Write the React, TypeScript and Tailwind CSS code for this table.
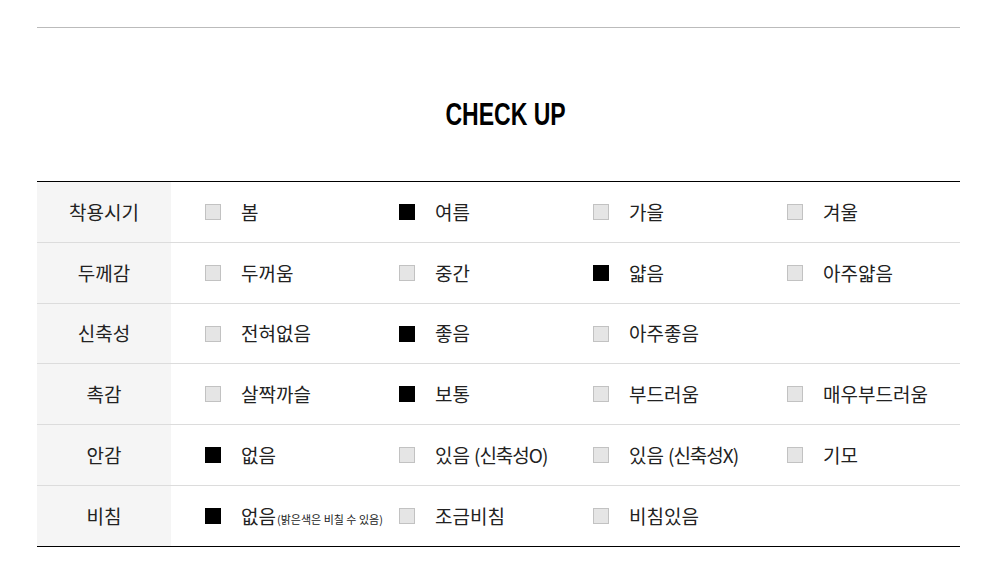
const rows: { label: string; items: { text: string; note?: string; on?: boolean }[] }[] = [
  { label: '착용시기', items: [{ text: '봄' }, { text: '여름', on: true }, { text: '가을' }, { text: '겨울' }] },
  { label: '두께감', items: [{ text: '두꺼움' }, { text: '중간' }, { text: '얇음', on: true }, { text: '아주얇음' }] },
  { label: '신축성', items: [{ text: '전혀없음' }, { text: '좋음', on: true }, { text: '아주좋음' }] },
  { label: '촉감', items: [{ text: '살짝까슬' }, { text: '보통', on: true }, { text: '부드러움' }, { text: '매우부드러움' }] },
  { label: '안감', items: [{ text: '없음', on: true }, { text: '있음(신축성O)' }, { text: '있음(신축성X)' }, { text: '기모' }] },
  { label: '비침', items: [{ text: '없음', note: '(밝은색은 비칠 수 있음)', on: true }, { text: '조금비침' }, { text: '비침있음' }] },
];

const rowClass = [
  'h-[60px]',
  'h-[61px] border-t border-[#dcdcdc]',
  'h-[60px] border-t border-[#dcdcdc]',
  'h-[61px] border-t border-[#dcdcdc]',
  'h-[61px] border-t border-[#dcdcdc]',
  'h-[61px] border-t border-[#dcdcdc]',
];

function Box({ on }: { on?: boolean }) {
  return (
    <span
      className={`w-4 h-4 shrink-0 ${on ? 'bg-black' : 'bg-[#e5e5e5] border border-[#c2c2c2]'}`}
    />
  );
}

function Label({ text }: { text: string }) {
  // "있음(신축성O)" style: small gap before the bracket, tighter latin
  const i = text.indexOf('(');
  if (i < 0) return <>{text}</>;
  return (
    <>
      {text.slice(0, i)}
      <span className="ml-1 tracking-[-1px]">{text.slice(i)}</span>
    </>
  );
}

export default function App() {
  return (
    <div className="w-[998px] h-[574px] bg-white font-['Noto_Sans_CJK_KR','Noto_Sans',sans-serif] text-[#222]">
      <div className="pt-[27px] pl-[37px] pr-[38px]">
        <div className="h-px bg-[#bbbbbb]" />
        <div className="mt-[68px] pl-[15px] flex justify-center">
          <h2 className="font-['Liberation_Sans',sans-serif] font-bold text-[32px] leading-[36px] text-black scale-x-[0.72]">
            CHECK UP
          </h2>
        </div>
        <div className="mt-[49px] border-t border-b border-black">
          {rows.map((row, i) => (
            <div key={row.label} className={`flex ${rowClass[i]}`}>
              <div className="w-[134px] shrink-0 bg-[#f5f5f5] flex items-center justify-center text-[19px]">
                {row.label}
              </div>
              {row.items.map((it) => (
                <div key={it.text} className="w-[194px] shrink-0 pl-[34px] flex items-center gap-5 text-[19px] whitespace-nowrap">
                  <Box on={it.on} />
                  <span>
                    <Label text={it.text} />
                    {it.note && <span className="text-[11px] ml-px">{it.note}</span>}
                  </span>
                </div>
              ))}
            </div>
          ))}
        </div>
      </div>
    </div>
  );
}
